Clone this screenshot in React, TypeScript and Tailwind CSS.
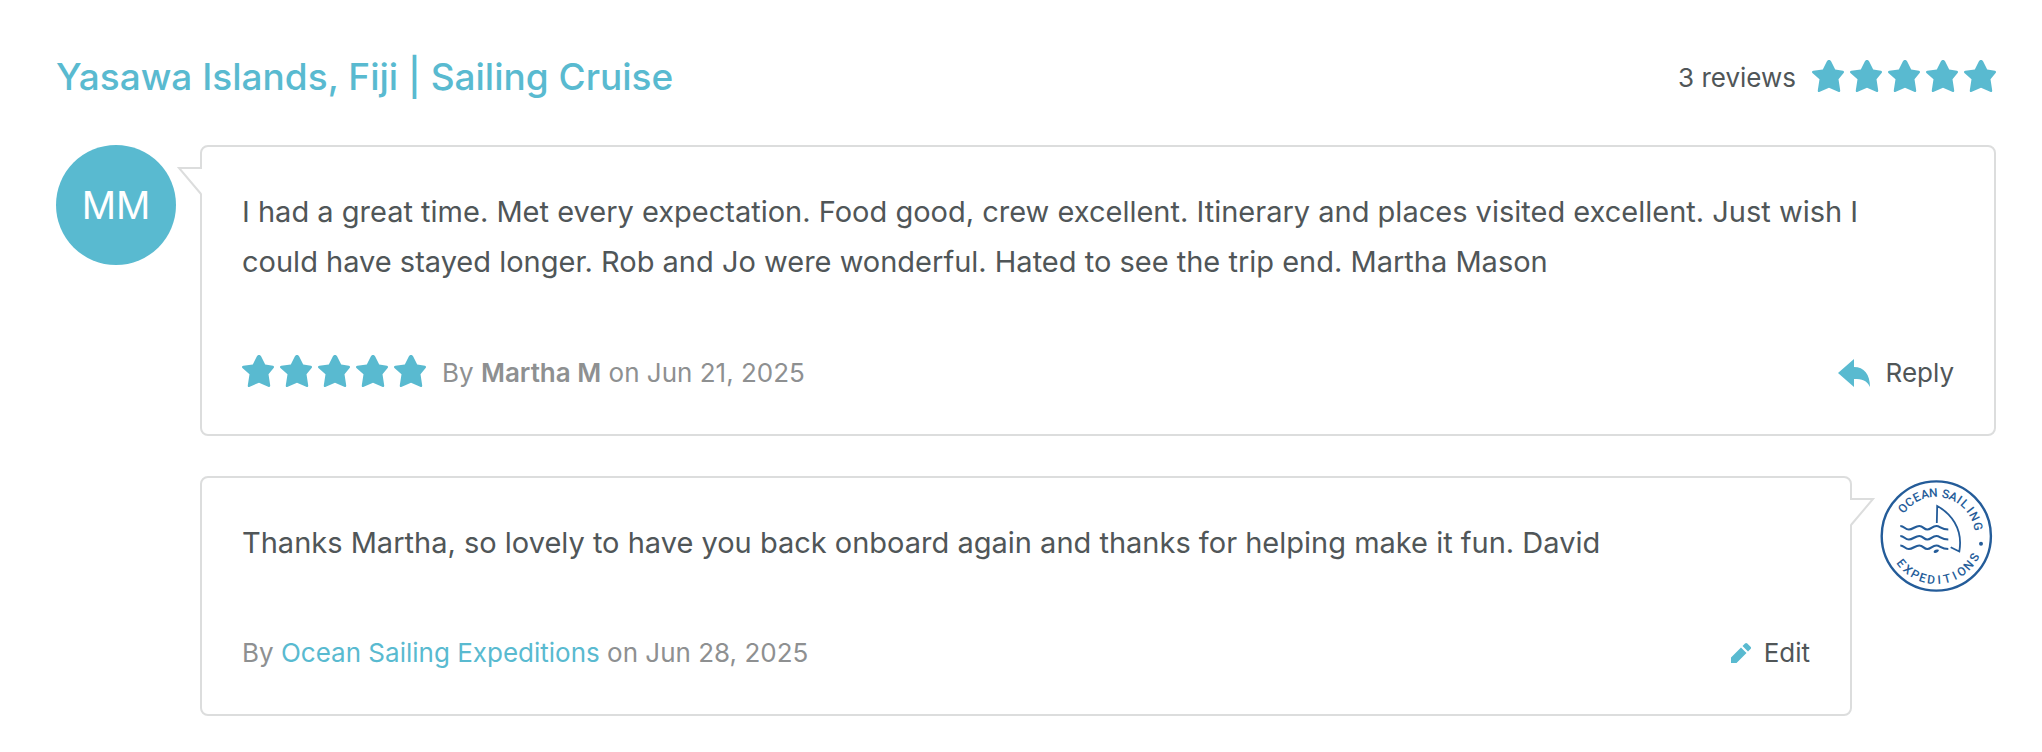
import React from "react";

const STARS = [1, 2, 3, 4, 5];

function Stars() {
  return (
    <span role="img" aria-label="5 out of 5 stars" className="flex shrink-0 gap-1.5">
      {STARS.map((n) => (
        <svg key={n} viewBox="0 0 32 32" className="size-8 fill-[#59bad0]" aria-hidden="true">
          <path d="M17 0c1 0 1.700.5 2.200 1.500L23.200 9.500 31 10.700c.6.1 1 .6 1 1.200 0 .5-.2.900-.6 1.300L26.500 19.200l1.700 11c.1 1.100-.2 1.800-1 1.800-.3 0-.7-.1-1-.3L17 27.700 7.800 31.700c-.4.200-.8.300-1.100.3-.8 0-1-.7-.9-1.800L7.500 19.200.7 13.200c-.4-.4-.7-.8-.7-1.300C0 11.300.5 10.800 1.300 10.700L10.800 9.500 14.800 1.500C15.300.5 16 0 17 0z" />
        </svg>
      ))}
    </span>
  );
}

function Tail({ side }: { side: "left" | "right" }) {
  return (
    <svg
      viewBox="0 0 27 30"
      aria-hidden="true"
      className={
        side === "left"
          ? "absolute top-5 right-full h-[30px] w-[27px]"
          : "absolute top-5 left-full h-[30px] w-[27px] -scale-x-100"
      }
    >
      <path d="M27 1H4L27 27z" fill="#fff" />
      <path d="M27 1H4L26 27" fill="none" stroke="#dcdddd" strokeWidth="2" />
    </svg>
  );
}

const TOP_ANGLES = [-50, -38, -26.5, -15, -3.5, 5, 13, 23.500, 33, 42, 52.500, 63, 77];
const BOTTOM_ANGLES = [52, 40, 28.500, 17.500, 6.500, -4, -14.500, -25, -36, -48, -61];

function ArcLetters({ text, angles, y }: { text: string; angles: number[]; y: number }) {
  return (
    <g aria-label={text}>
      {text.split("").map((letter, i) => (
        <text key={i} x="60" y={y} transform={`rotate(${angles[i]} 60 60)`}>
          {letter}
        </text>
      ))}
    </g>
  );
}

function Logo() {
  return (
    <svg viewBox="0 0 120 120" className="size-[120px] shrink-0" role="img" aria-label="Ocean Sailing Expeditions">
      <circle cx="60.300" cy="60" r="54.600" fill="none" stroke="#245c99" strokeWidth="2.400" />
      <g fill="none" stroke="#245c99" strokeWidth="2.200">
        <path d="M24.300 50c4 0 4.500 3.500 8.500 3.500s6.500-3.500 10.500-3.500 4.500 3.500 8 3.500 5-3.500 9-3.500 4.500 3.500 12 3.500" />
        <path d="M24.300 60c4 0 4.500 3.500 8.500 3.500s6.500-3.500 10.500-3.500 4.500 3.500 8 3.500 5-3.500 9-3.500 4.500 3.500 12 3.500" />
        <path d="M24.300 69.500c4 0 4.500 3.500 8.500 3.500s6.500-3.500 10.500-3.500 4.500 3.500 8 3.500 5-3.500 9-3.500 4.500 3.500 12 3.500" />
        <path d="M60.800 47l.4-17C74 37 87.500 52 83.300 75.500L74.700 71.300" strokeWidth="1.800" />
      </g>
      <path d="M57.500 76c1-2.500 3-2.800 5.500-2-1 2.500-2.500 3.200-4.500 3z" fill="#245c99" />
      <circle cx="105" cy="67.700" r="2" fill="#245c99" />
      <g fill="#245c99" textAnchor="middle" className="font-['Roboto',sans-serif] text-[12px] font-medium">
        <ArcLetters text="OCEAN SAILING" angles={TOP_ANGLES} y={21} />
        <ArcLetters text="EXPEDITIONS" angles={BOTTOM_ANGLES} y={108} />
      </g>
    </svg>
  );
}

export default function App() {
  return (
    <main className="min-h-screen bg-white pt-[50px] pr-[46px] pb-9 pl-14 font-['Inter',sans-serif] text-[26px] text-[#505658]">
      <header className="mb-[42px] flex items-center justify-between">
        <h2 className="text-[37px] leading-[53px] font-medium text-[#59bad0]">Yasawa Islands, Fiji | Sailing Cruise</h2>
        <div className="flex items-center gap-4 pt-0.5">
          <span>3 reviews</span>
          <span className="pb-1">
            <Stars />
          </span>
        </div>
      </header>

      <article className="flex items-start gap-6">
        <div className="flex size-[120px] shrink-0 items-center justify-center rounded-full bg-[#59bad0] text-[38px] text-white">
          MM
        </div>
        <div className="relative flex-1 rounded-lg border-2 border-[#dcdddd] p-10">
          <Tail side="left" />
          <p className="pr-5 text-[29px] leading-[50px]">
            I had a great time. Met every expectation. Food good, crew excellent. Itinerary and places visited
            excellent. Just wish I could have stayed longer. Rob and Jo were wonderful. Hated to see the trip end.
            Martha Mason
          </p>
          <footer className="mt-16 flex items-center leading-[43px]">
            <span className="pb-1">
              <Stars />
            </span>
            <span className="ml-4 text-[#8e9091]">
              By <strong className="font-semibold">Martha M</strong> on Jun 21, 2025
            </span>
            <button type="button" className="ml-auto flex items-center gap-4">
              <svg viewBox="0 0 32 28" className="h-7 w-8 fill-[#59bad0]" aria-hidden="true">
                <path d="M0 14L16 0v8c10 0 16 7 16 20-3-6.500-8-8-16-8v8z" />
              </svg>
              Reply
            </button>
          </footer>
        </div>
      </article>

      <article className="mt-10 ml-36 flex items-start gap-6">
        <div className="relative flex-1 rounded-lg border-2 border-[#dcdddd] p-10">
          <Tail side="right" />
          <p className="text-[29px] leading-[50px]">
            Thanks Martha, so lovely to have you back onboard again and thanks for helping make it fun. David
          </p>
          <footer className="mt-16 flex items-center leading-[42px]">
            <span className="text-[#8e9091]">
              By <a href="#" className="text-[#59bad0]">Ocean Sailing Expeditions</a> on Jun 28, 2025
            </span>
            <button type="button" className="ml-auto flex items-center gap-3">
              <svg viewBox="0 0 22 22" className="size-[22px] fill-[#59bad0]" aria-hidden="true">
                <path d="M1 15.500L11 5.500l5.500 5.500-10 10H1zM12.500 4l2.500-2.500c.8-.8 1.500-.8 2.300 0l3.200 3.200c.8.8.8 1.500 0 2.300L18 9.500z" />
              </svg>
              Edit
            </button>
          </footer>
        </div>
        <Logo />
      </article>
    </main>
  );
}
